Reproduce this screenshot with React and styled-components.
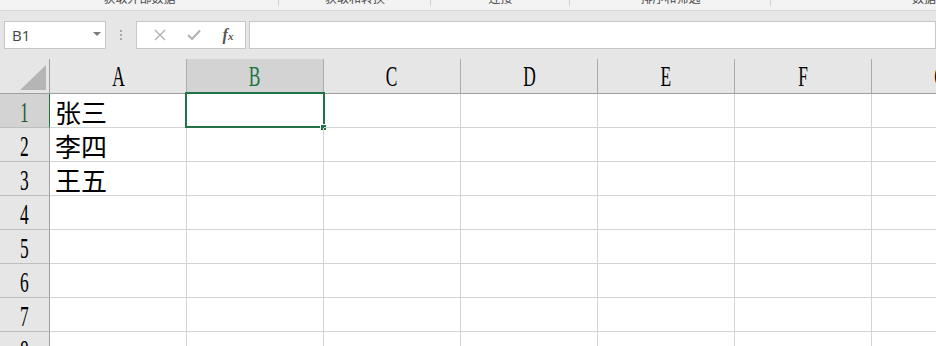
import React from "react";
import styled, { createGlobalStyle } from "styled-components";

const GlobalStyle = createGlobalStyle`
  html, body {
    margin: 0;
    padding: 0;
    background: #ffffff;
  }
  * {
    box-sizing: border-box;
  }
`;

const groups = [
  { label: "获取外部数据", width: 279 },
  { label: "获取和转换", width: 152 },
  { label: "连接", width: 139 },
  { label: "排序和筛选", width: 201 },
  { label: "数据工具", width: 330 },
];

const columns = ["A", "B", "C", "D", "E", "F", "G"];
const rows = [1, 2, 3, 4, 5, 6, 7, 8];
const data = { 1: "张三", 2: "李四", 3: "王五" };

export default function App() {
  return (
    <Page>
      <GlobalStyle />
      <Ribbon>
        {groups.map((g, i) => (
          <RibbonGroup key={g.label} $width={g.width} $last={i === groups.length - 1}>
            <RibbonLabel>{g.label}</RibbonLabel>
          </RibbonGroup>
        ))}
      </Ribbon>

      <FormulaBar>
        <NameBox>
          <NameText>B1</NameText>
          <DropCaret />
        </NameBox>
        <Grip>
          <Dot />
          <Dot />
          <Dot />
        </Grip>
        <EditButtons>
          <IconButton>
            <svg width="12" height="12" viewBox="0 0 12 12">
              <path d="M1 1 L11 11 M11 1 L1 11" stroke="#b2b2b2" strokeWidth="1.4" fill="none" />
            </svg>
          </IconButton>
          <IconButton>
            <svg width="14" height="12" viewBox="0 0 14 12">
              <path d="M1 6 L5 10 L13 1.5" stroke="#b2b2b2" strokeWidth="2" fill="none" />
            </svg>
          </IconButton>
          <IconButton>
            <FxLabel>
              f<small>x</small>
            </FxLabel>
          </IconButton>
        </EditButtons>
        <FormulaInput />
      </FormulaBar>

      <Sheet>
        <Corner>
          <CornerMark />
        </Corner>
        {columns.map((c) => (
          <ColHeader key={c} $selected={c === "B"}>
            <HeaderGlyph>{c}</HeaderGlyph>
          </ColHeader>
        ))}

        {rows.map((r) => (
          <React.Fragment key={r}>
            <RowHeader $selected={r === 1}>
              <HeaderGlyph>{r}</HeaderGlyph>
            </RowHeader>
            {columns.map((c) => (
              <Cell key={c}>
                {c === "A" && data[r] ? <CellText>{data[r]}</CellText> : null}
                {c === "B" && r === 1 ? (
                  <Selection>
                    <FillHandle />
                  </Selection>
                ) : null}
              </Cell>
            ))}
          </React.Fragment>
        ))}
      </Sheet>
    </Page>
  );
}

const Page = styled.div`
  width: 936px;
  height: 346px;
  overflow: hidden;
  background: #ffffff;
`;

/* ribbon group captions, only their lower half shows */
const Ribbon = styled.div`
  display: flex;
  height: 11px;
  overflow: hidden;
  background: #f3f3f3;
  border-bottom: 1px solid #d5d5d5;
`;

const RibbonGroup = styled.div`
  position: relative;
  flex: 0 0 ${(p) => p.$width}px;
  display: flex;
  justify-content: center;

  &::after {
    content: "";
    display: ${(p) => (p.$last ? "none" : "block")};
    position: absolute;
    right: 0;
    top: 0;
    width: 1px;
    height: 6px;
    background: #d2d2d2;
  }
`;

const RibbonLabel = styled.span`
  font-family: "Noto Sans CJK SC", sans-serif;
  font-size: 12px;
  line-height: 12px;
  margin-top: -8px;
  color: #4a4a4a;
  white-space: nowrap;
`;

const FormulaBar = styled.div`
  display: flex;
  align-items: flex-start;
  height: 48px;
  padding: 10px 0 0 4px;
  background: #e6e6e6;
`;

const NameBox = styled.div`
  position: relative;
  width: 102px;
  height: 28px;
  display: flex;
  align-items: center;
  padding-left: 7px;
  background: #ffffff;
  border: 1px solid #c6c6c6;
`;

const NameText = styled.span`
  font-family: "Open Sans", "Liberation Sans", sans-serif;
  font-size: 15px;
  color: #444444;
`;

const DropCaret = styled.span`
  position: absolute;
  right: 4px;
  top: 10px;
  width: 0;
  height: 0;
  border-left: 4px solid transparent;
  border-right: 4px solid transparent;
  border-top: 4px solid #7a7a7a;
`;

const Grip = styled.div`
  width: 30px;
  height: 28px;
  display: flex;
  flex-direction: column;
  align-items: center;
  justify-content: center;
  gap: 2px;
`;

const Dot = styled.span`
  width: 2px;
  height: 2px;
  background: #a8a8a8;
`;

const EditButtons = styled.div`
  width: 110px;
  height: 28px;
  display: flex;
  align-items: center;
  padding-left: 6px;
  background: #ffffff;
  border: 1px solid #c6c6c6;
`;

const IconButton = styled.div`
  width: 36px;
  height: 26px;
  display: flex;
  align-items: center;
  justify-content: center;
`;

const FxLabel = styled.span`
  font-family: "Liberation Serif", serif;
  font-style: italic;
  font-weight: bold;
  font-size: 16px;
  color: #555555;

  small {
    font-size: 11px;
  }
`;

const FormulaInput = styled.div`
  flex: 1;
  height: 28px;
  margin-left: 3px;
  background: #ffffff;
  border: 1px solid #c6c6c6;
`;

const Sheet = styled.div`
  display: grid;
  grid-template-columns: 50px repeat(7, 137px);
  grid-template-rows: 35px repeat(8, 34px);
`;

const Corner = styled.div`
  display: flex;
  align-items: flex-end;
  justify-content: flex-end;
  padding: 0 3px 3px 0;
  background: #e6e6e6;
  border-right: 1px solid #9f9f9f;
  border-bottom: 1px solid #9f9f9f;
`;

const CornerMark = styled.span`
  width: 0;
  height: 0;
  border-left: 26px solid transparent;
  border-bottom: 25px solid #b5b5b5;
`;

const ColHeader = styled.div`
  display: flex;
  align-items: center;
  justify-content: center;
  background: ${(p) => (p.$selected ? "#d3d3d3" : "#e6e6e6")};
  color: ${(p) => (p.$selected ? "#217346" : "#000000")};
  border-right: 1px solid #ababab;
  border-bottom: 1px solid #9f9f9f;
  overflow: hidden;
`;

const RowHeader = styled.div`
  display: flex;
  align-items: center;
  justify-content: center;
  padding-top: 3px;
  background: ${(p) => (p.$selected ? "#d3d3d3" : "#e6e6e6")};
  color: ${(p) => (p.$selected ? "#1f5c36" : "#000000")};
  border-right: 1px solid ${(p) => (p.$selected ? "#217346" : "#9f9f9f")};
  border-bottom: 1px solid #bebebe;
`;

const HeaderGlyph = styled.span`
  display: inline-block;
  font-family: "Liberation Serif", serif;
  font-size: 29px;
  line-height: 29px;
  transform: scaleX(0.6);
`;

const Cell = styled.div`
  position: relative;
  display: flex;
  align-items: flex-end;
  padding: 0 0 2px 5px;
  border-right: 1px solid #d4d4d4;
  border-bottom: 1px solid #d4d4d4;
`;

const CellText = styled.span`
  font-family: "Noto Sans CJK SC", sans-serif;
  font-size: 26px;
  line-height: 27px;
  color: #000000;
  white-space: nowrap;
`;

const Selection = styled.div`
  position: absolute;
  left: -2px;
  top: -2px;
  right: -2px;
  bottom: -1px;
  border: 2px solid #217346;
  pointer-events: none;
`;

const FillHandle = styled.span`
  position: absolute;
  right: -3px;
  bottom: -4px;
  width: 5px;
  height: 5px;
  background: #217346;
  box-shadow: 0 0 0 1px #ffffff;
`;
